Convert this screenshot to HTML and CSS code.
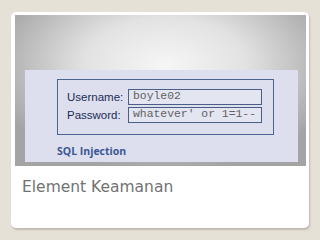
FILE: index.html
```html
<!DOCTYPE html>
<html lang="en">
<head>
    <meta charset="UTF-8">
    <title>Element Keamanan</title>
    <link rel="stylesheet" href="styles.css">
</head>
<body>
    <div class="card">
        <div class="picture">
            <div class="panel">
                <div class="login-box">
                    <div class="row">
                        <span class="label">Username:</span>
                        <span class="field">boyle02</span>
                    </div>
                    <div class="row">
                        <span class="label">Password:</span>
                        <span class="field">whatever' or 1=1--</span>
                    </div>
                </div>
                <div class="panel-title">SQL Injection</div>
            </div>
        </div>
        <div class="caption">Element Keamanan</div>
    </div>
</body>
</html>
```

FILE: styles.css
```css
* {
    box-sizing: border-box;
    margin: 0;
    padding: 0;
}

body {
    width: 320px;
    height: 240px;
    background-color: #e6e1d7;
    padding: 12px 0 0 11px;
    font-family: "Liberation Sans", Arial, sans-serif;
}

.card {
    width: 298px;
    height: 216px;
    background-color: #ffffff;
    border-radius: 5px;
    padding: 3px 3px 0 4px;
    box-shadow: 1px 2px 2px rgba(120, 110, 95, 0.35);
}

.picture {
    width: 291px;
    height: 151px;
    padding: 55px 8px 4px 10px;
    background: radial-gradient(ellipse 180px 105px at 150px 50px, #f6f6f6 0%, #e2e2e2 45%, #a4a4a4 100%);
}

.panel {
    height: 92px;
    background-color: #dddfee;
    padding: 9px 0 0 32px;
}

.login-box {
    width: 217px;
    height: 56px;
    border: 1px solid #4b6490;
    padding: 9px 0 0 9px;
    display: flex;
    flex-direction: column;
    gap: 2px;
}

.row {
    display: flex;
    align-items: center;
}

.label {
    width: 61px;
    font-size: 11.5px;
    color: #1c2d54;
}

.field {
    width: 134px;
    height: 16px;
    border: 1.5px solid #4a5e86;
    background-color: #e3e5f1;
    padding-left: 4px;
    font-family: "Liberation Mono", "Courier New", monospace;
    font-size: 11.4px;
    line-height: 13px;
    color: #626262;
}

.panel-title {
    margin-top: 9px;
    font-family: "Open Sans", sans-serif;
    font-weight: bold;
    font-size: 10.5px;
    color: #3a5793;
}

.caption {
    padding: 12px 0 0 7px;
    font-family: "DejaVu Sans", Verdana, sans-serif;
    font-size: 15.5px;
    color: #727272;
}
```
